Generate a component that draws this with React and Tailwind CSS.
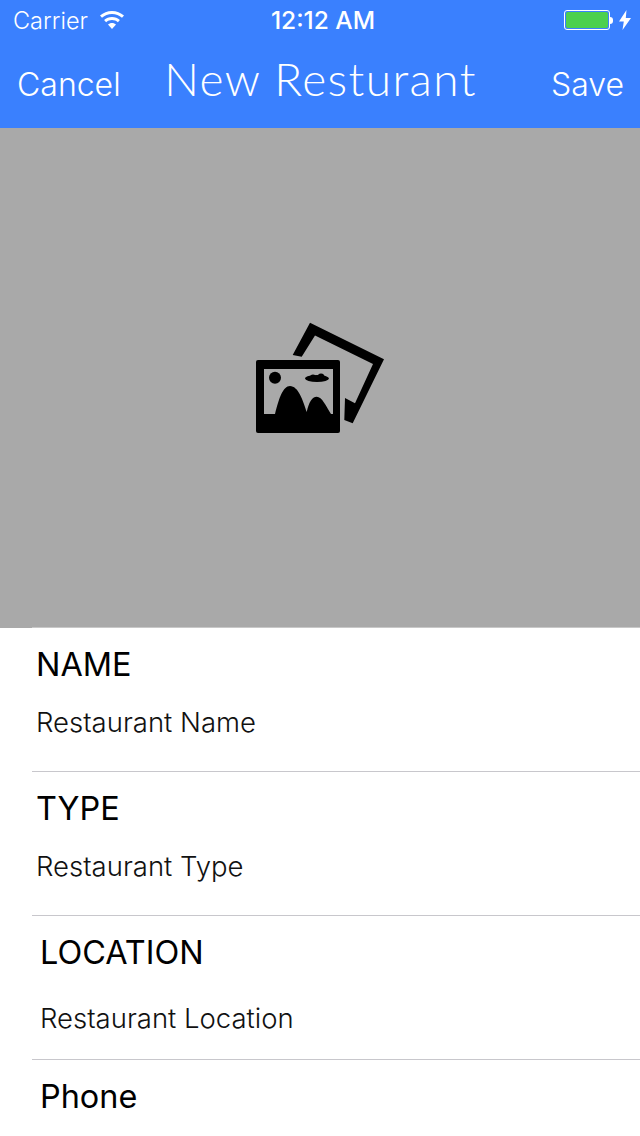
const fields = [
  { label: 'NAME', placeholder: 'Restaurant Name', inset: 'pl-[4px] pt-[17px]', gap: 'mt-[19px]' },
  { label: 'TYPE', placeholder: 'Restaurant Type', inset: 'pl-[4px] pt-[17px]', gap: 'mt-[19px]' },
  { label: 'LOCATION', placeholder: 'Restaurant Location', inset: 'pl-[8px] pt-[17px]', gap: 'mt-[27px]' },
  { label: 'Phone', placeholder: '', inset: 'pl-[8px] pt-[17px]', gap: 'mt-[19px]' },
];

const WifiIcon = () => (
  <svg width="24" height="18" viewBox="0 0 24 18" fill="white">
    <path d="M12 0C7.400 0 3.300 1.700 0 4.600l2 2.200C4.700 4.400 8.200 3 12 3s7.300 1.400 10 3.800l2-2.200C20.700 1.700 16.600 0 12 0z" />
    <path d="M12 6c-3 0-5.800 1.100-7.900 3l2 2.200C7.700 9.800 9.800 9 12 9s4.300.8 5.900 2.200l2-2.200C17.800 7.100 15 6 12 6z" />
    <path d="M12 12c-1.500 0-3 .6-4 1.500L12 18l4-4.500c-1-.9-2.500-1.500-4-1.500z" />
  </svg>
);

const BoltIcon = () => (
  <svg width="12" height="20" viewBox="0 0 12 20" fill="white">
    <path d="M7.500 0 0 11.500h4.800L3.500 20 12 8H6.800z" />
  </svg>
);

const PhotosIcon = () => (
  <svg width="128" height="112" viewBox="0 0 128 112">
    <path d="M54 0.700 128 37.300 96.700 101.300 88.300 98 89 76 99 81.300 117 42 59 13.500 45.700 34.700 36.700 33z" fill="black" />
    <rect x="0" y="38" width="84" height="73" rx="2" fill="black" />
    <rect x="8" y="47" width="69" height="45" fill="#a9a9a9" />
    <circle cx="19" cy="55.700" r="6" fill="black" />
    <ellipse cx="61" cy="56.500" rx="12" ry="3.500" fill="black" />
    <circle cx="57" cy="55.500" r="3" fill="black" />
    <circle cx="65" cy="55" r="3.500" fill="black" />
    <path d="M19 92C23 76 27 64 34 64C42 64 47 78 50.700 90C53 80 56 74.700 60.700 74.700C66 74.700 70 84 75 92z" fill="black" />
  </svg>
);

export default function App() {
  return (
    <div className="w-[640px] h-[1136px] overflow-hidden bg-white font-['Inter',sans-serif]">
      {/* Nav bar */}
      <div className="h-[128px] bg-[#3a80fe] text-white">
        <div className="h-[40px] flex items-center justify-between pl-[13px] pr-[9px]">
          <div className="w-[220px] flex items-center gap-[12px]">
            <span className="mt-[2px] text-[23.500px] leading-none font-[350]">Carrier</span>
            <WifiIcon />
          </div>
          <span className="ml-[2px] text-[24.500px] leading-none font-medium">12:12 AM</span>
          <div className="w-[220px] flex items-center justify-end">
            <div className="w-[46px] h-[20px] rounded-[3px] border border-white p-[1px]">
              <div className="h-full rounded-[2px] bg-[#4cd04f]" />
            </div>
            <div className="w-[3px] h-[7px] rounded-r-sm bg-white mr-[6px]" />
            <BoltIcon />
          </div>
        </div>
        <div className="h-[88px] grid grid-cols-[1fr_auto_1fr] items-center pl-[17px] pr-[16px]">
          <span className="mt-[2px] text-[32px] leading-none font-[350]">Cancel</span>
          <span className="mb-[10px] text-[46px] leading-none font-['Lato',sans-serif] font-light tracking-[1.400px]">New Resturant</span>
          <span className="mt-[2px] text-[32px] leading-none font-[350] text-right">Save</span>
        </div>
      </div>

      {/* Photo picker */}
      <div className="h-[499px] bg-[#a9a9a9] flex items-center justify-center">
        <PhotosIcon />
      </div>
      <div className="h-px bg-[#a9a9a9]">
        <div className="h-px ml-8 bg-[#c8c8c8]" />
      </div>

      {/* Form rows */}
      <div>
        {fields.map((field) => (
          <div key={field.label} className="h-[144px] ml-8 border-b border-[#c8c7cc]">
            <div className={field.inset}>
              <div className="text-[32.400px] leading-[40px] text-black">{field.label}</div>
              {field.placeholder && (
                <div className={`${field.gap} text-[27.500px] leading-[36px] font-light text-[#111]`}>
                  {field.placeholder}
                </div>
              )}
            </div>
          </div>
        ))}
      </div>
    </div>
  );
}
